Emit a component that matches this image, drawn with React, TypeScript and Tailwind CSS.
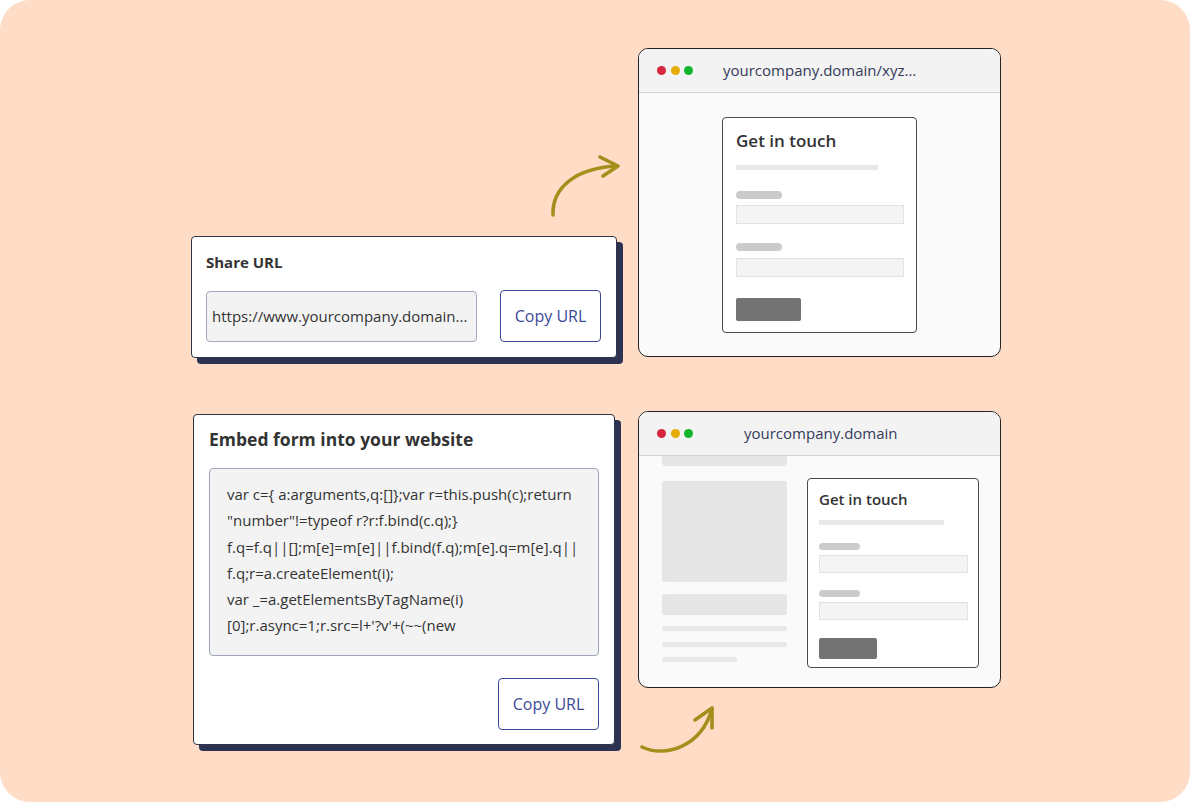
import React from "react";

const font = { fontFamily: "'Open Sans', Lato, sans-serif" };

const Dots = () => (
  <div className="flex items-center gap-[4.5px]">
    <span className="w-[9px] h-[9px] rounded-full bg-[#d7263d]" />
    <span className="w-[9px] h-[9px] rounded-full bg-[#e5ad06]" />
    <span className="w-[9px] h-[9px] rounded-full bg-[#13b52c]" />
  </div>
);

const BrowserBar = ({ url, urlOffset }: { url: string; urlOffset: string }) => (
  <div className="h-[44px] shrink-0 bg-[#f3f3f3] border-b border-[#d2d2d2] flex items-center pl-[18px]">
    <Dots />
    <span className={`${urlOffset} text-[15px] text-[#353a5a]`}>{url}</span>
  </div>
);

const CopyButton = () => (
  <button
    type="button"
    className="w-[101px] h-[52px] shrink-0 rounded-[4px] border-[1.5px] border-[#3d4898] bg-white text-[16px] text-[#3d4898]"
  >
    Copy URL
  </button>
);

const TopArrow = () => (
  <svg width="80" height="70" viewBox="0 0 80 70" fill="none" className="ml-[354px] mb-[16px]">
    <path d="M8 65 C 7 38, 30 18, 72 16" stroke="#a68e1c" strokeWidth="3.6" strokeLinecap="round" />
    <path d="M55 7 L73 16 L58 26" stroke="#a68e1c" strokeWidth="3.6" strokeLinecap="round" strokeLinejoin="round" />
  </svg>
);

const BottomArrow = () => (
  <svg width="85" height="60" viewBox="0 0 85 60" fill="none" className="ml-[-3px] mt-[12px]">
    <path d="M7 47 C 30 58, 66 47, 77 9" stroke="#a68e1c" strokeWidth="3.6" strokeLinecap="round" />
    <path d="M60 20 L77 8 L77 28" stroke="#a68e1c" strokeWidth="3.6" strokeLinecap="round" strokeLinejoin="round" />
  </svg>
);

export default function App() {
  const code = [
    "var c={ a:arguments,q:[]};var r=this.push(c);return",
    "\"number\"!=typeof r?r:f.bind(c.q);}",
    "f.q=f.q||[];m[e]=m[e]||f.bind(f.q);m[e].q=m[e].q||",
    "f.q;r=a.createElement(i);",
    "var _=a.getElementsByTagName(i)",
    "[0];r.async=1;r.src=l+'?v'+(~~(new",
  ];

  return (
    <div className="w-[1190px] h-[802px] bg-white" style={font}>
      <div className="w-full h-full rounded-[30px] bg-[#fedcc5] flex flex-col">
        {/* row 1 */}
        <div className="flex pl-[191px] pt-[48px]">
          <div className="w-[447px] flex flex-col justify-end">
            <TopArrow />
            <div className="w-[426px] h-[122px] bg-white border border-[#2f3449] rounded-[4px] shadow-[6px_6px_0_#2c3352] px-[14px] pt-[15px] mb-[-1px]">
              <div className="text-[15px] leading-[20px] font-bold text-[#333]">Share URL</div>
              <div className="flex items-center gap-[23px] mt-[18px]">
                <div className="w-[271px] h-[51px] bg-[#f3f3f3] border border-[#a0a8bd] rounded-[4px] flex items-center pl-[5px] text-[15px] text-[#333] whitespace-nowrap">
                  https://www.yourcompany.domain...
                </div>
                <CopyButton />
              </div>
            </div>
          </div>
          <div className="w-[363px] h-[309px] rounded-[10px] border-[1.5px] border-[#222] bg-[#fafafa] overflow-hidden flex flex-col">
            <BrowserBar url="yourcompany.domain/xyz..." urlOffset="ml-[30px]" />
            <div className="flex justify-center pt-[24px]">
              <div className="w-[195px] h-[216px] bg-white border border-[#4a4a55] rounded-[4px] pl-[13px] pt-[11px]">
                <div className="text-[17px] leading-[24px] font-semibold text-[#333]">Get in touch</div>
                <div className="w-[142px] h-[5px] bg-[#e8e8e8] mt-[12px]" />
                <div className="w-[46px] h-[8px] rounded-full bg-[#cbcbcb] mt-[21px]" />
                <div className="w-[168px] h-[19px] bg-[#f4f4f4] border border-[#e2e2e2] mt-[6px]" />
                <div className="w-[46px] h-[8px] rounded-full bg-[#cbcbcb] mt-[19px]" />
                <div className="w-[168px] h-[19px] bg-[#f4f4f4] border border-[#e2e2e2] mt-[7px]" />
                <div className="w-[65px] h-[23px] bg-[#737373] rounded-[2px] mt-[21px]" />
              </div>
            </div>
          </div>
        </div>

        {/* row 2 */}
        <div className="flex pl-[193px] mt-[54px]">
          <div className="w-[445px] pt-[3px]">
            <div className="w-[422px] h-[331px] bg-white border border-[#2f3449] rounded-[4px] shadow-[6px_6px_0_#2c3352] px-[15px] pt-[13px] flex flex-col">
              <div className="text-[17.5px] leading-[22px] font-bold text-[#333]">Embed form into your website</div>
              <div className="w-[390px] h-[188px] bg-[#f3f3f3] border border-[#a0a8bd] rounded-[4px] mt-[18px] pl-[17px] pt-[12px] text-[15px] leading-[26.3px] text-[#333]">
                {code.map((l, i) => (
                  <div key={i} className="whitespace-nowrap">{l}</div>
                ))}
              </div>
              <div className="self-end mt-[22px]">
                <CopyButton />
              </div>
            </div>
          </div>
          <div className="flex flex-col">
            <div className="w-[363px] h-[277px] rounded-[10px] border-[1.5px] border-[#222] bg-[#fafafa] overflow-hidden flex flex-col">
              <BrowserBar url="yourcompany.domain" urlOffset="ml-[51px]" />
              <div className="flex pl-[23px]">
                <div className="w-[125px] flex flex-col">
                  <div className="h-[10px] bg-[#e5e5e5] rounded-b-[4px]" />
                  <div className="h-[101px] bg-[#e5e5e5] rounded-[3px] mt-[15px]" />
                  <div className="h-[21px] bg-[#e5e5e5] rounded-[3px] mt-[12px]" />
                  <div className="h-[5px] bg-[#e8e8e8] rounded-full mt-[11px]" />
                  <div className="h-[5px] bg-[#e8e8e8] rounded-full mt-[11px]" />
                  <div className="w-[75px] h-[5px] bg-[#e8e8e8] rounded-full mt-[10px]" />
                </div>
                <div className="w-[172px] h-[190px] bg-white border border-[#4a4a55] rounded-[4px] ml-[20px] mt-[22px] pl-[11px] pt-[9px]">
                  <div className="text-[15px] leading-[22px] font-semibold text-[#333]">Get in touch</div>
                  <div className="w-[125px] h-[5px] bg-[#e8e8e8] mt-[10px]" />
                  <div className="w-[41px] h-[7px] rounded-full bg-[#cbcbcb] mt-[18px]" />
                  <div className="w-[149px] h-[18px] bg-[#f4f4f4] border border-[#e2e2e2] mt-[5px]" />
                  <div className="w-[41px] h-[7px] rounded-full bg-[#cbcbcb] mt-[17px]" />
                  <div className="w-[149px] h-[18px] bg-[#f4f4f4] border border-[#e2e2e2] mt-[5px]" />
                  <div className="w-[58px] h-[21px] bg-[#737373] rounded-[2px] mt-[18px]" />
                </div>
              </div>
            </div>
            <BottomArrow />
          </div>
        </div>
      </div>
    </div>
  );
}
